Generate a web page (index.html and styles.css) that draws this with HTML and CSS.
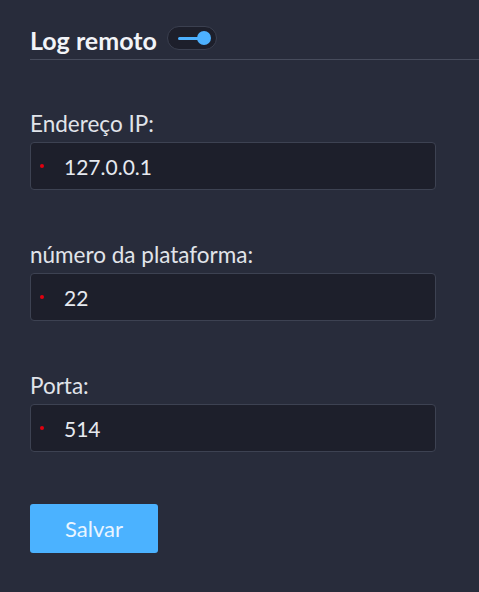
FILE: index.html
```html
<!DOCTYPE html>
<html lang="pt">

<head>
    <meta charset="UTF-8" />
    <title>Log remoto</title>
    <link rel="stylesheet" href="styles.css">
</head>

<body>
    <div class="panel">
        <div class="section-head">
            <h2>Log remoto</h2>
            <span class="switch on"><span class="knob"></span></span>
        </div>

        <form class="form">
            <div class="field">
                <label for="ip">Endereço IP:</label>
                <div class="input-box">
                    <span class="req"></span>
                    <input type="text" id="ip" value="127.0.0.1" />
                </div>
            </div>

            <div class="field">
                <label for="platform">número da plataforma:</label>
                <div class="input-box">
                    <span class="req"></span>
                    <input type="text" id="platform" value="22" />
                </div>
            </div>

            <div class="field">
                <label for="port">Porta:</label>
                <div class="input-box">
                    <span class="req"></span>
                    <input type="text" id="port" value="514" />
                </div>
            </div>

            <div class="actions">
                <button type="button">Salvar</button>
            </div>
        </form>
    </div>
</body>

</html>
```

FILE: styles.css
```css
/* Dark page background */
body {
    margin: 0;
    font-family: Lato, 'Noto Sans', sans-serif;
    background: #282c3b;
    color: #e6e9ef;
}

.panel {
    padding-left: 30px;
}

/* Title row with switch and divider */
.section-head {
    display: flex;
    align-items: flex-start;
    gap: 10px;
    padding-top: 26px;
    padding-bottom: 5px;
    border-bottom: 1px solid #474c5c;
}

.section-head h2 {
    margin: 0;
    font-size: 25px;
    line-height: 28px;
    font-weight: 700;
    color: #f2f4f8;
}

.switch {
    width: 48px;
    height: 22px;
    border: 1px solid #3b4050;
    border-radius: 12px;
    background: #1d1f2b;
    position: relative;
}

.switch::before {
    content: "";
    position: absolute;
    left: 10px;
    top: 10px;
    width: 24px;
    height: 3px;
    border-radius: 2px;
    background: #4db1ff;
}

.knob {
    position: absolute;
    right: 5px;
    top: 4px;
    width: 14px;
    height: 14px;
    border-radius: 50%;
    background: #4db1ff;
}

/* Form */
.form {
    display: flex;
    flex-direction: column;
    gap: 53px;
    padding-top: 52px;
    max-width: 406px;
}

.field label {
    display: block;
    margin-bottom: 6px;
    font-size: 22.5px;
    line-height: 24px;
    color: #e1e4ea;
}

.input-box {
    display: flex;
    align-items: center;
    height: 46px;
    border: 1px solid #3d4252;
    border-radius: 4px;
    background: #1d1f2b;
}

.req {
    width: 4px;
    height: 4px;
    margin-left: 9px;
    border-radius: 50%;
    background: #e3000f;
}

.input-box input {
    flex: 1;
    min-width: 0;
    margin-left: 20px;
    padding: 0;
    border: none;
    outline: none;
    background: transparent;
    font-family: Lato, 'Noto Sans', sans-serif;
    font-size: 21px;
    color: #e6e9ef;
}

.actions {
    margin-top: -1px;
}

button {
    width: 128px;
    height: 49px;
    border: none;
    border-radius: 3px;
    background: #4bb2ff;
    color: #e9f5ff;
    font-family: Lato, 'Noto Sans', sans-serif;
    font-size: 22px;
    cursor: pointer;
}
```
